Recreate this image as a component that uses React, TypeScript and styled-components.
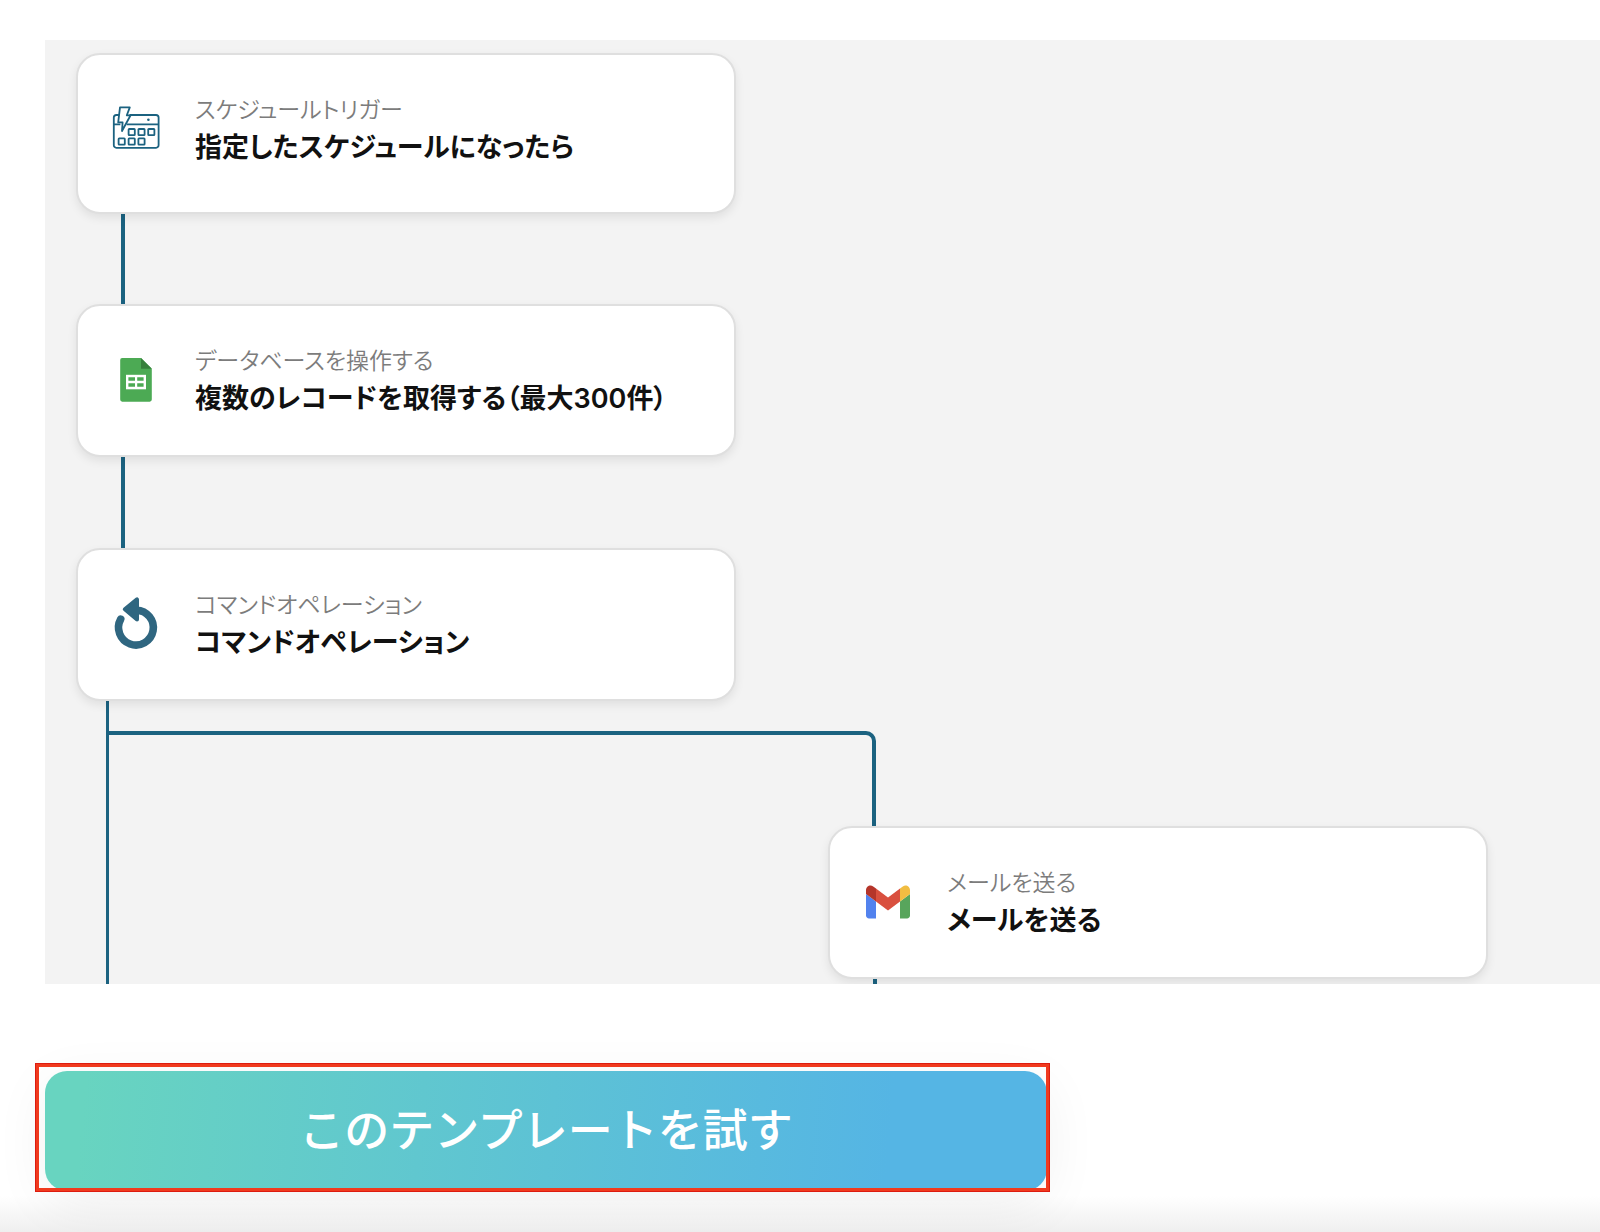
import React from "react";
import styled, { createGlobalStyle } from "styled-components";

const line = "#1b6280";

const GlobalStyle = createGlobalStyle`
  *, *::before, *::after { box-sizing: border-box; }
  body {
    margin: 0;
    background: #fff;
    color: #111;
    font-family: Inter, "Noto Sans CJK JP", sans-serif;
  }
`;

const Page = styled.main`
  min-height: 100vh;
  padding: 40px 0 40px 45px;
  background: linear-gradient(to top, #efefef, rgba(255, 255, 255, 0) 36px) #fff;
  overflow: hidden;
`;

const FlowPanel = styled.section`
  padding: 13px 31px 0;
  background: #f3f3f3;
  overflow: hidden;
`;

const Card = styled.article<{ $first?: boolean }>`
  position: relative;
  display: flex;
  align-items: center;
  gap: 35px;
  width: 660px;
  padding: 35px 32px ${(p) => (p.$first ? 44 : 36)}px 34px;
  background: #fff;
  border: 2px solid #dfdfdf;
  border-radius: 24px;
  box-shadow: 0 4px 10px rgba(0, 0, 0, 0.08);
`;

const CardIcon = styled.svg`
  flex: none;
  width: 48px;
  height: 48px;
  overflow: visible;
`;

const CardText = styled.div`
  min-width: 0;
  padding-top: 2px;
  font-feature-settings: "palt";
  white-space: nowrap;
`;

const Kind = styled.p`
  margin: 0;
  color: #7c7c7c;
  font-size: 23px;
  font-weight: 350;
  line-height: 36px;
`;

const Title = styled.h3`
  margin: 0;
  font-size: 27px;
  font-weight: 600;
  line-height: 40px;
`;

const Connector = styled.div<{ $length: number }>`
  width: 4px;
  height: ${(p) => p.$length}px;
  margin-left: 45px;
  background: ${line};
`;

const Branch = styled.div`
  margin-left: 30px;
  padding-top: 30px;
  border-left: 3px solid ${line};
`;

const Elbow = styled.div`
  width: 767px;
  height: 95px;
  border: solid ${line};
  border-width: 4px 4px 0 0;
  border-top-right-radius: 10px;
`;

const BranchSteps = styled.div`
  padding-left: 719px;
`;

const Action = styled.div`
  position: relative;
  width: 1002px;
  max-width: calc(100% - 45px);
  margin-top: 87px;

  &::after {
    content: "";
    position: absolute;
    inset: -8px -3px -1px -10px;
    border: 4px solid #f03a1e;
    outline: 1px solid #dd1c10;
    outline-offset: -1px;
    pointer-events: none;
  }
`;

const TryButton = styled.button`
  display: block;
  width: 100%;
  height: 120px;
  padding: 0;
  border: 0;
  border-radius: 22px;
  background: linear-gradient(95deg, #68d4c0 4%, #55b5e4 84%);
  box-shadow: 0 12px 56px rgba(0, 0, 0, 0.06);
  color: #fff;
  font-family: inherit;
  font-size: 45px;
  font-weight: 500;
  line-height: 72px;
  cursor: pointer;
`;

const ScheduleIcon = () => (
  <CardIcon viewBox="0 0 48 48" fill="none" stroke={line} strokeWidth="1.8" strokeLinejoin="round" aria-hidden="true">
    <path d="M7 10H4.4A2.6 2.6 0 0 0 1.8 12.6V40A2.6 2.6 0 0 0 4.4 42.8H44A2.6 2.6 0 0 0 46.6 40V12.6A2.6 2.6 0 0 0 44 10H17.5" />
    <path d="M1.8 19.3H8.4M14.6 19.3H46.6" />
    <path d="M8 2.4H17.8L14.8 10.3H18.6L10 26L10.6 17.4H6.2Z" />
    {[[16.6, 24], [26.4, 24], [36.2, 24], [6.6, 33.4], [16.6, 33.4], [26.4, 33.4]].map(([x, y]) => (
      <rect key={`${x}-${y}`} x={x} y={y} width="6.2" height="6.2" rx="0.6" />
    ))}
    <circle cx="36.4" cy="14.8" r="1.3" fill={line} stroke="none" />
  </CardIcon>
);

const SheetsIcon = () => (
  <CardIcon viewBox="0 0 48 48" aria-hidden="true">
    <path d="M10.5 2H29L39.8 12.8V43.6A2.1 2.1 0 0 1 37.7 45.7H10.4A2.1 2.1 0 0 1 8.2 43.6V4.1A2.1 2.1 0 0 1 10.5 2Z" fill="#4caa54" />
    <path d="M29 2L39.8 12.8H29Z" fill="#37803c" />
    <path d="M14 18.8H34V33.3H14Z" fill="#fff" />
    <path d="M16.4 21.2H23V24.8H16.4ZM25.2 21.2H31.6V24.8H25.2ZM16.4 27.2H23V30.8H16.4ZM25.2 27.2H31.6V30.8H25.2Z" fill="#4caa54" />
  </CardIcon>
);

const LoopIcon = () => (
  <CardIcon viewBox="0 0 48 48" fill="none" stroke="#2f6680" aria-hidden="true">
    <path d="M8.7 19.2A17.4 17.4 0 1 0 24.4 10.2" strokeWidth="7.6" strokeLinecap="round" />
    <path d="M12.8 9.3L25 -0.6V19.4Z" fill="#2f6680" strokeWidth="4" strokeLinejoin="round" />
  </CardIcon>
);

const GmailIcon = () => (
  <CardIcon viewBox="48 27 96 96" aria-hidden="true">
    <path d="M58 108h14V74L52 59v43c0 3.32 2.69 6 6 6" fill="#5282ee" />
    <path d="M120 108h14c3.32 0 6-2.69 6-6V59l-20 15" fill="#58a55c" />
    <path d="M120 48v26l20-15v-8c0-7.42-8.47-11.65-14.4-7.2" fill="#f1bd42" />
    <path d="M72 74V48l24 18 24-18v26L96 92" fill="#d9503f" />
    <path d="M52 51v8l20 15V48l-5.6-4.2c-5.94-4.45-14.4-.22-14.4 7.2" fill="#b5352a" />
  </CardIcon>
);

type StepProps = { icon: React.ReactNode; kind: string; title: string; first?: boolean };

const Step = ({ icon, kind, title, first }: StepProps) => (
  <Card $first={first}>
    {icon}
    <CardText>
      <Kind>{kind}</Kind>
      <Title>{title}</Title>
    </CardText>
  </Card>
);

export default function App() {
  return (
    <>
      <GlobalStyle />
      <Page lang="ja">
        <FlowPanel>
          <Step first icon={<ScheduleIcon />} kind="スケジュールトリガー" title="指定したスケジュールになったら" />
          <Connector $length={90} />
          <Step icon={<SheetsIcon />} kind="データベースを操作する" title="複数のレコードを取得する（最大300件）" />
          <Connector $length={91} />
          <Step icon={<LoopIcon />} kind="コマンドオペレーション" title="コマンドオペレーション" />
          <Branch>
            <Elbow />
            <BranchSteps>
              <Step icon={<GmailIcon />} kind="メールを送る" title="メールを送る" />
              <Connector $length={5} />
            </BranchSteps>
          </Branch>
        </FlowPanel>
        <Action>
          <TryButton type="button">このテンプレートを試す</TryButton>
        </Action>
      </Page>
    </>
  );
}
